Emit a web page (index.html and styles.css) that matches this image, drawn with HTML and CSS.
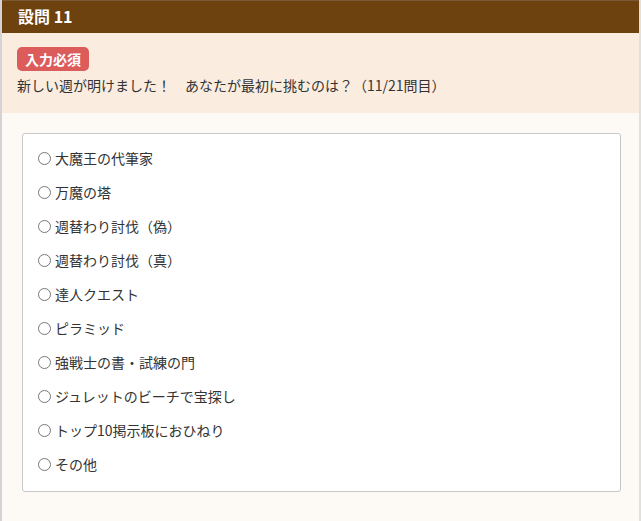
FILE: index.html
```html
<!DOCTYPE html>
<html lang="ja">
<head>
    <meta charset="UTF-8">
    <title>設問 11</title>
    <link rel="stylesheet" href="styles.css">
</head>
<body>
    <div class="question">
        <header class="q-head">設問 11</header>
        <div class="q-info">
            <span class="badge">入力必須</span>
            <p class="q-text">新しい週が明けました！　あなたが最初に挑むのは？（11/21問目）</p>
        </div>
        <div class="q-body">
            <ul class="choices">
                <li><span class="radio"></span>大魔王の代筆家</li>
                <li><span class="radio"></span>万魔の塔</li>
                <li><span class="radio"></span>週替わり討伐（偽）</li>
                <li><span class="radio"></span>週替わり討伐（真）</li>
                <li><span class="radio"></span>達人クエスト</li>
                <li><span class="radio"></span>ピラミッド</li>
                <li><span class="radio"></span>強戦士の書・試練の門</li>
                <li><span class="radio"></span>ジュレットのビーチで宝探し</li>
                <li><span class="radio"></span>トップ10掲示板におひねり</li>
                <li><span class="radio"></span>その他</li>
            </ul>
        </div>
    </div>
</body>
</html>
```

FILE: styles.css
```css
body {
    margin: 0;
    font-family: "Noto Sans CJK JP", "Liberation Sans", sans-serif;
    font-size: 14px;
    color: #333;
    background: #fff;
}
.question {
    width: 637px;
    height: 521px;
    border-left: 2px solid #d4d4d4;
    border-right: 2px solid #e2e0dc;
    background: #fdfaf5;
    box-sizing: content-box;
}
.q-head {
    background: #6e420e;
    color: #fff;
    font-weight: bold;
    font-size: 16px;
    height: 32px;
    line-height: 31px;
    padding-left: 16px;
    border-top: 1px solid #7a5a35;
}
.q-info {
    background: #faecdf;
    padding: 14px 15px 0;
    height: 66px;
}
.badge {
    display: inline-block;
    background: #dc5b5b;
    color: #fff;
    font-weight: bold;
    font-size: 14px;
    line-height: 24px;
    padding: 0 8px;
    border-radius: 5px;
}
.q-text {
    margin: 3px 0 0;
    line-height: 22px;
}
.q-body {
    padding: 20px 18px 0 20px;
}
.choices {
    list-style: none;
    margin: 0;
    padding: 7px 15px 10px;
    background: #fff;
    border: 1px solid #c8c8c8;
    border-radius: 3px;
}
.choices li {
    display: flex;
    align-items: center;
    height: 34px;
}
.radio {
    width: 11px;
    height: 11px;
    border: 1px solid #777;
    border-radius: 50%;
    margin-right: 4px;
}
```
